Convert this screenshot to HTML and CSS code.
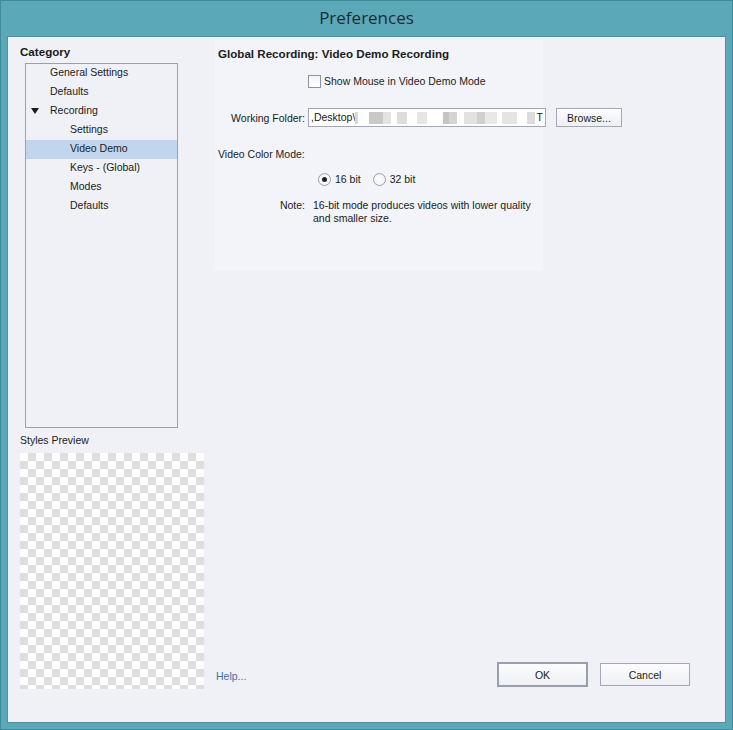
FILE: index.html
```html
<!DOCTYPE html>
<html lang="en">
<head>
    <meta charset="UTF-8">
    <title>Preferences</title>
    <link rel="stylesheet" href="styles.css">
</head>
<body>
    <div class="window">
        <div class="titlebar">Preferences</div>
        <div class="client">
            <div class="sidebar">
                <h3>Category</h3>
                <div class="tree">
                    <div class="row lvl1">General Settings</div>
                    <div class="row lvl1">Defaults</div>
                    <div class="row lvl1"><span class="arrow"></span>Recording</div>
                    <div class="row lvl2">Settings</div>
                    <div class="row lvl2 selected">Video Demo</div>
                    <div class="row lvl2">Keys - (Global)</div>
                    <div class="row lvl2">Modes</div>
                    <div class="row lvl2">Defaults</div>
                </div>
                <div class="preview-label">Styles Preview</div>
                <div class="checker"></div>
            </div>
            <div class="main">
                <div class="form">
                    <h3>Global Recording: Video Demo Recording</h3>
                    <label class="check-row"><span class="checkbox"></span>Show Mouse in Video Demo Mode</label>
                    <div class="field-row">
                        <span class="field-label">Working Folder:</span>
                        <div class="textbox">,Desktop\<span class="blur"></span><span class="tail">T</span></div>
                        <button class="btn browse">Browse...</button>
                    </div>
                    <div class="section-label">Video Color Mode:</div>
                    <div class="radio-row">
                        <span class="radio checked"></span><span class="radio-text">16 bit</span>
                        <span class="radio"></span><span class="radio-text">32 bit</span>
                    </div>
                    <div class="note-row">
                        <span class="field-label">Note:</span>
                        <span class="note-text">16-bit mode produces videos with lower quality<br>and smaller size.</span>
                    </div>
                </div>
                <div class="footer">
                    <a class="help" href="#">Help...</a>
                    <button class="btn ok">OK</button>
                    <button class="btn cancel">Cancel</button>
                </div>
            </div>
        </div>
    </div>
</body>
</html>
```

FILE: styles.css
```css
body {
    margin: 0;
    font-family: "Liberation Sans", Arial, sans-serif;
    font-size: 10.5px;
    color: #1b1b1b;
}
.window {
    width: 733px;
    height: 730px;
    box-sizing: border-box;
    background: #5ba8b9;
    border: 1px solid #3f8a9c;
    padding: 0 6px 6px 6px;
    display: flex;
    flex-direction: column;
}
.titlebar {
    height: 35px;
    line-height: 34px;
    text-align: center;
    font-family: "Open Sans", sans-serif;
    font-size: 17px;
    color: #1b2d33;
}
.client {
    flex: 1;
    background: #eff1f6;
    border: 1px solid #4a93a5;
    display: flex;
}
.sidebar {
    width: 184px;
    padding: 8px 0 0 12px;
}
h3 {
    margin: 0;
    font-size: 11.6px;
    line-height: 13px;
    font-weight: bold;
}
.tree {
    margin: 5px 0 0 5px;
    width: 151px;
    height: 363px;
    border: 1px solid #9a9fb1;
}
.row {
    height: 19px;
    line-height: 17px;
    position: relative;
}
.lvl1 {
    padding-left: 24px;
}
.lvl2 {
    padding-left: 44px;
}
.selected {
    background: #c2d5ee;
}
.arrow {
    position: absolute;
    left: 5px;
    top: 6px;
    width: 0;
    height: 0;
    border-left: 4px solid transparent;
    border-right: 4px solid transparent;
    border-top: 6px solid #1b1b1b;
}
.preview-label {
    margin-top: 6px;
    line-height: 13px;
}
.checker {
    margin-top: 6px;
    width: 184px;
    height: 236px;
    background-color: #fff;
    background-image: conic-gradient(#dedede 0 25%, #fff 0 50%, #dedede 0 75%, #fff 0);
    background-size: 16px 16px;
}
.main {
    flex: 1;
    display: flex;
    flex-direction: column;
    padding-top: 3px;
}
.form {
    margin-left: 11px;
    width: 325px;
    height: 224px;
    padding: 7px 0 0 3px;
    background: #f2f4f9;
}
.check-row {
    display: flex;
    align-items: center;
    margin: 15px 0 0 90px;
    white-space: nowrap;
    line-height: 13px;
}
.checkbox {
    width: 11px;
    height: 11px;
    border: 1px solid #8d93a2;
    background: linear-gradient(#f4f4f4, #ffffff);
    margin-right: 3px;
}
.field-row {
    display: flex;
    align-items: center;
    margin-top: 20px;
    white-space: nowrap;
}
.field-label {
    width: 87px;
    text-align: right;
    flex: none;
}
.textbox {
    margin-left: 3px;
    width: 232px;
    height: 17px;
    line-height: 17px;
    padding: 0 2px;
    border: 1px solid #a3a7b4;
    background: #fff;
    display: flex;
    flex: none;
}
.blur {
    width: 214px;
    height: 12px;
    margin-top: 3px;
    background: linear-gradient(90deg, #d8d8d8 0 3px, #fff 3px 14px, #c9c9c9 14px 28px, #e3e3e3 28px 36px, #fff 36px 42px, #dddddd 42px 52px, #fff 52px 62px, #e6e6e6 62px 72px, #fff 72px 88px, #c4c4c4 88px 94px, #d4d4d4 94px 102px, #fff 102px 109px, #e2e2e2 109px 122px, #d0d0d0 122px 130px, #e8e8e8 130px 142px, #fff 142px 147px, #e4e4e4 147px 162px, #fff 162px 172px, #dcdcdc 172px 180px, #fff 180px 192px, #cfcfcf 192px 198px, #fff 198px);
}
.tail {
    margin-left: 1px;
}
.btn {
    font-family: inherit;
    font-size: 10.5px;
    color: #1b1b1b;
    background: linear-gradient(#fcfcfd, #eef0f4);
    border: 1px solid #a4a8b8;
    padding: 0;
}
.browse {
    margin-left: 10px;
    width: 66px;
    height: 19px;
    flex: none;
}
.section-label {
    margin-top: 21px;
    line-height: 13px;
}
.radio-row {
    display: flex;
    align-items: center;
    margin: 12px 0 0 100px;
    line-height: 13px;
}
.radio {
    width: 11px;
    height: 11px;
    border: 1px solid #9aa0ad;
    border-radius: 50%;
    background: radial-gradient(#ffffff, #eceef2);
    position: relative;
}
.radio.checked::after {
    content: "";
    position: absolute;
    left: 3px;
    top: 3px;
    width: 5px;
    height: 5px;
    border-radius: 50%;
    background: #222;
}
.radio-text {
    margin: 0 12px 0 4px;
}
.note-row {
    display: flex;
    margin-top: 13px;
    line-height: 13px;
    white-space: nowrap;
}
.note-text {
    margin-left: 8px;
}
.footer {
    margin-top: auto;
    display: flex;
    align-items: center;
    padding: 0 35px 35px 12px;
}
.help {
    color: #3f70a8;
    text-decoration: none;
    margin-right: auto;
    padding-top: 2px;
}
.ok {
    width: 91px;
    height: 25px;
    border: 2px solid #9a9fb0;
}
.cancel {
    margin-left: 12px;
    width: 90px;
    height: 23px;
}
```
